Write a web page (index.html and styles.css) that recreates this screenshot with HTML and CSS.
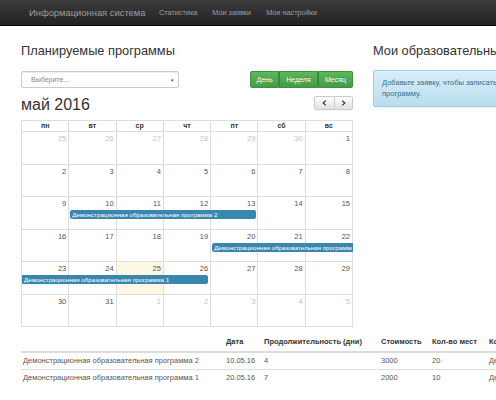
FILE: index.html
```html
<!DOCTYPE html>
<html lang="ru">
<head>
<meta charset="utf-8">
<title>Информационная система</title>
<link rel="stylesheet" href="styles.css">
</head>
<body>
<div class="page">
  <nav class="navbar">
    <span class="brand">Информационная система</span>
    <a class="nav-link">Статистика</a>
    <a class="nav-link">Мои заявки</a>
    <a class="nav-link">Мои настройки</a>
  </nav>
  <div class="container">
    <div class="row">
      <div class="col-main">
        <h3 class="title">Планируемые программы</h3>
        <div class="toolbar">
          <div class="select"><span class="select-text">Выберите...</span><span class="select-arrow">▾</span></div>
          <div class="btn-group">
            <span class="btn btn-success b-day">День</span>
            <span class="btn btn-success b-week">Неделя</span>
            <span class="btn btn-success b-month">Месяц</span>
          </div>
        </div>
        <div class="toolbar toolbar-month">
          <h2 class="month">май 2016</h2>
          <div class="btn-group nav-group">
            <span class="btn btn-default b-prev"><svg width="5" height="6" viewBox="0 0 5 6"><polyline points="3.8,0.6 1.2,3 3.8,5.4" fill="none" stroke="#333" stroke-width="1.2"/></svg></span>
            <span class="btn btn-default b-next"><svg width="5" height="6" viewBox="0 0 5 6"><polyline points="1.2,0.6 3.8,3 1.2,5.4" fill="none" stroke="#333" stroke-width="1.2"/></svg></span>
          </div>
        </div>
        <div class="cal">
          <div class="cal-head">
            <div>пн</div><div>вт</div><div>ср</div><div>чт</div><div>пт</div><div>сб</div><div>вс</div>
          </div>
          <div class="week">
            <div class="day other">25</div><div class="day other">26</div><div class="day other">27</div><div class="day other">28</div><div class="day other">29</div><div class="day other">30</div><div class="day">1</div>
          </div>
          <div class="week">
            <div class="day">2</div><div class="day">3</div><div class="day">4</div><div class="day">5</div><div class="day">6</div><div class="day">7</div><div class="day">8</div>
          </div>
          <div class="week">
            <div class="day">9</div><div class="day">10</div><div class="day">11</div><div class="day">12</div><div class="day">13</div><div class="day">14</div><div class="day">15</div>
            <div class="event ev-a">Демонстрационная образовательная программа 2</div>
          </div>
          <div class="week">
            <div class="day">16</div><div class="day">17</div><div class="day">18</div><div class="day">19</div><div class="day">20</div><div class="day">21</div><div class="day">22</div>
            <div class="event ev-b not-end">Демонстрационная образовательная программа 1</div>
          </div>
          <div class="week">
            <div class="day">23</div><div class="day">24</div><div class="day today">25</div><div class="day">26</div><div class="day">27</div><div class="day">28</div><div class="day">29</div>
            <div class="event ev-c not-start">Демонстрационная образовательная программа 1</div>
          </div>
          <div class="week">
            <div class="day">30</div><div class="day">31</div><div class="day other">1</div><div class="day other">2</div><div class="day other">3</div><div class="day other">4</div><div class="day other">5</div>
          </div>
        </div>
      </div>
      <div class="col-side">
        <h3 class="title">Мои образовательные программы</h3>
        <div class="alert">Добавьте заявку, чтобы записаться на программу.</div>
      </div>
    </div>
    <table class="table">
      <colgroup>
        <col class="c1"><col class="c2"><col class="c3"><col class="c4"><col class="c5"><col class="c6">
      </colgroup>
      <thead>
        <tr><th></th><th>Дата</th><th>Продолжительность (дни)</th><th>Стоимость</th><th>Кол-во мест</th><th>Координатор</th></tr>
      </thead>
      <tbody>
        <tr><td>Демонстрационная образовательная программа 2</td><td>10.05.16</td><td>4</td><td>3000</td><td>20</td><td>Демонстрационный</td></tr>
        <tr><td>Демонстрационная образовательная программа 1</td><td>20.05.16</td><td>7</td><td>2000</td><td>10</td><td>Демонстрационный</td></tr>
      </tbody>
    </table>
  </div>
</div>
</body>
</html>
```
FILE: styles.css
```css
html, body {
  margin: 0;
  padding: 0;
  overflow: hidden;
  background: #fff;
}

.page {
  width: 496px;
  height: 400px;
  overflow: hidden;
  font-family: "Liberation Sans", Arial, sans-serif;
  color: #333;
}

/* navbar */
.navbar {
  height: 26px;
  box-sizing: border-box;
  background: linear-gradient(#3c3c3c, #222);
  border-bottom: 1px solid #080808;
  display: flex;
  align-items: center;
  padding-left: 29px;
}
.brand {
  font-size: 9.4px;
  color: #9d9d9d;
  margin-right: 6px;
}
.nav-link {
  font-size: 7.3px;
  color: #9d9d9d;
  padding: 0 7.5px;
}

/* layout */
.container {
  padding-left: 21px;
}
.row {
  display: flex;
  gap: 20px;
  align-items: flex-start;
}
.col-main {
  width: 332px;
  flex: none;
}
.col-side {
  width: 175px;
  flex: none;
}
.title {
  margin: 18px 0 0;
  font-size: 12.8px;
  line-height: 14px;
  font-weight: normal;
  color: #333;
  white-space: nowrap;
}

/* toolbar */
.toolbar {
  display: flex;
  justify-content: space-between;
  align-items: flex-start;
  margin-top: 13px;
}
.toolbar-month {
  margin-top: 8px;
}
.select {
  width: 158px;
  height: 17px;
  box-sizing: border-box;
  border: 1px solid #ccc;
  border-radius: 2px;
  box-shadow: inset 0 1px 1px rgba(0,0,0,.075);
  display: flex;
  align-items: center;
  justify-content: space-between;
  padding: 0 4px 0 9px;
  background: #fff;
}
.select-text {
  font-size: 7px;
  color: #888;
}
.select-arrow {
  font-size: 5px;
  color: #444;
}
.btn-group {
  display: flex;
  height: 17px;
}
.btn {
  display: flex;
  align-items: center;
  justify-content: center;
  box-sizing: border-box;
  height: 100%;
  font-size: 7px;
}
.btn-success {
  color: #fff;
  background: linear-gradient(#5cb85c, #449d44);
  border: 1px solid #3e8f3e;
  text-shadow: 0 -1px 0 rgba(0,0,0,.2);
}
.btn-success + .btn-success {
  border-left: 1px solid #398439;
}
.b-day { width: 29px; border-radius: 2px 0 0 2px; }
.b-week { width: 39px; }
.b-month { width: 35px; border-radius: 0 2px 2px 0; }

.month {
  margin: 0;
  font-size: 16px;
  line-height: 17px;
  font-weight: normal;
  color: #333;
}
.nav-group {
  height: 14px;
}
.btn-default {
  background: linear-gradient(#fff, #e0e0e0);
  border: 1px solid #ccc;
  box-shadow: 0 1px 1px rgba(0,0,0,.05);
}
.b-prev { width: 21px; border-radius: 2px 0 0 2px; }
.b-next { width: 18px; border-left: 0; border-radius: 0 2px 2px 0; }

/* calendar */
.cal {
  margin-top: 7px;
  width: 332px;
  box-sizing: border-box;
  border-left: 1px solid #ddd;
  border-top: 1px solid #ddd;
}
.cal-head {
  display: grid;
  grid-template-columns: repeat(7, minmax(0, 1fr));
  border-bottom: 1px solid #ddd;
}
.cal-head div {
  border-right: 1px solid #ddd;
  font-size: 7px;
  font-weight: bold;
  line-height: 10px;
  text-align: center;
  color: #333;
}
.week {
  display: grid;
  grid-template-columns: repeat(7, minmax(0, 1fr));
  grid-template-rows: 13px 9px 1fr;
  height: 32.5px;
  box-sizing: border-box;
  border-bottom: 1px solid #ddd;
}
.day {
  grid-row: 1 / -1;
  border-right: 1px solid #ddd;
  padding: 2px 2px 0 0;
  text-align: right;
  font-size: 7.5px;
  line-height: 9px;
  color: #555;
}
.day:nth-child(1) { grid-column: 1; }
.day:nth-child(2) { grid-column: 2; }
.day:nth-child(3) { grid-column: 3; }
.day:nth-child(4) { grid-column: 4; }
.day:nth-child(5) { grid-column: 5; }
.day:nth-child(6) { grid-column: 6; }
.day:nth-child(7) { grid-column: 7; }
.day.other { color: #c4c4c4; }
.day.today { background: #fcf8e3; }

.event {
  grid-row: 2;
  z-index: 1;
  min-width: 0;
  height: 9px;
  box-sizing: border-box;
  background: #3a87ad;
  border: 1px solid #3a87ad;
  border-radius: 2px;
  color: #fff;
  font-size: 6.2px;
  line-height: 7px;
  padding: 0 1px;
  white-space: nowrap;
  overflow: hidden;
  margin: 0 2px 0 1px;
}
.ev-a { grid-column: 2 / 6; }
.ev-b { grid-column: 5 / 8; }
.ev-c { grid-column: 1 / 5; margin-right: 3px; }
.not-end { margin-right: 0; border-top-right-radius: 0; border-bottom-right-radius: 0; }
.not-start { margin-left: 0; border-top-left-radius: 0; border-bottom-left-radius: 0; }

/* alert */
.alert {
  margin-top: 12px;
  padding: 7px 8px;
  border: 1px solid #9acfea;
  border-radius: 2px;
  background: linear-gradient(#d9edf7, #b9def0);
  color: #31708f;
  font-size: 7.5px;
  line-height: 10.7px;
  box-shadow: inset 0 1px 0 rgba(255,255,255,.25), 0 1px 2px rgba(0,0,0,.05);
}

/* table */
.table {
  margin-top: 5px;
  border-collapse: collapse;
  table-layout: fixed;
  width: 560px;
}
.c1 { width: 203px; }
.c2 { width: 38px; }
.c3 { width: 117px; }
.c4 { width: 51px; }
.c5 { width: 57px; }
.c6 { width: 94px; }
.table th {
  font-size: 7.5px;
  font-weight: bold;
  text-align: left;
  padding: 5px 2px 4px;
  line-height: 10px;
  border-bottom: 2px solid #ddd;
  color: #333;
  white-space: nowrap;
  overflow: hidden;
}
.table td {
  font-size: 7.5px;
  padding: 3px 2px;
  line-height: 10px;
  color: #555;
  border-top: 1px solid #ddd;
  white-space: nowrap;
  overflow: hidden;
}
.table tbody tr:first-child td {
  border-top: 0;
}
```
